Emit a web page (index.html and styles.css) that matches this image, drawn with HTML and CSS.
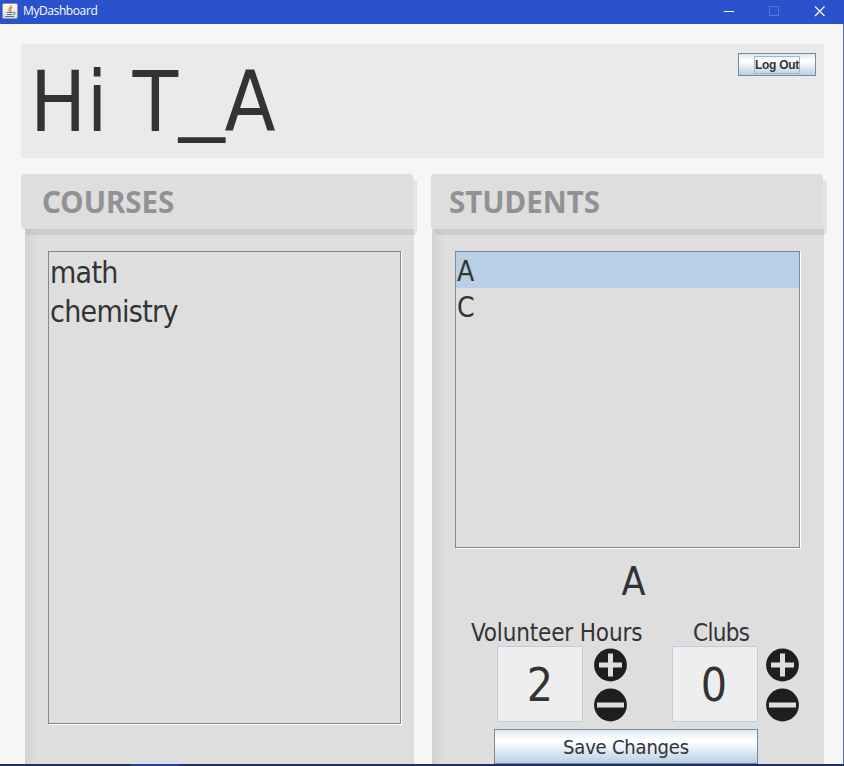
FILE: index.html
```html
<!DOCTYPE html>
<html lang="en">
<head>
<meta charset="utf-8">
<title>MyDashboard</title>
<link rel="stylesheet" href="styles.css">
</head>
<body>
<div class="window">
  <header class="titlebar">
    <svg class="app-icon" width="16" height="16" viewBox="0 0 16 16">
      <defs><linearGradient id="tile" x1="0" y1="0" x2="0" y2="1"><stop offset="0" stop-color="#fff"/><stop offset="1" stop-color="#d3dadd"/></linearGradient></defs>
      <rect x=".5" y=".5" width="15" height="15" rx="1.5" fill="url(#tile)" stroke="#8d969b"/>
      <path d="M9.500 2C10 4 6 5 7 7l1 1.500M10.500 4.500C8 5.500 8 6.500 9 7.500L8.500 9" fill="none" stroke="#e78123" stroke-width="1.200"/>
      <path d="M4.500 9.500h6M5 11.500h5M3 13.500h9M11 9.500c3-1 2.500 2 0 2" fill="none" stroke="#4d789c" stroke-width="1"/>
    </svg>
    <span class="app-name">MyDashboard</span>
    <svg class="controls" width="110" height="22" viewBox="0 0 110 22">
      <path d="M0 11.500h10" stroke="#fff"/>
      <rect x="45.500" y="6.500" width="9" height="9" fill="none" stroke="#5378dc"/>
      <path d="M91 6.500l9.500 9.500M100.500 6.500l-9.500 9.500" stroke="#fff" stroke-width="1.200"/>
    </svg>
  </header>
  <main class="content">
    <section class="greeting">
      <h1>Hi T<span class="underscore">_</span>A</h1>
      <button class="btn logout"><span>Log Out</span></button>
    </section>
    <div class="columns">
      <section class="card courses">
        <h2><span>COURSES</span></h2>
        <div class="body">
          <ul class="list">
            <li>math</li>
            <li>chemistry</li>
          </ul>
        </div>
      </section>
      <section class="card students">
        <h2><span>STUDENTS</span></h2>
        <div class="body">
          <ul class="list">
            <li class="selected">A</li>
            <li>C</li>
          </ul>
          <div class="student-name">A</div>
          <div class="counters">
            <div class="counter volunteer">
              <div class="label">Volunteer Hours</div>
              <div class="control">
                <div class="value">2</div>
                <div class="steps">
                  <svg width="34" height="34" viewBox="0 0 34 34"><circle cx="16.500" cy="17" r="16.400" fill="#1e1e1e"/><path d="M16.500 5.500v23M5 17h23" stroke="#dedede" stroke-width="5"/></svg>
                  <svg width="34" height="34" viewBox="0 0 34 34"><circle cx="16.500" cy="17" r="16.400" fill="#1e1e1e"/><path d="M3 17h27" stroke="#dedede" stroke-width="5"/></svg>
                </div>
              </div>
            </div>
            <div class="counter clubs">
              <div class="label">Clubs</div>
              <div class="control">
                <div class="value">0</div>
                <div class="steps">
                  <svg width="34" height="34" viewBox="0 0 34 34"><circle cx="16.500" cy="17" r="16.400" fill="#1e1e1e"/><path d="M16.500 5.500v23M5 17h23" stroke="#dedede" stroke-width="5"/></svg>
                  <svg width="34" height="34" viewBox="0 0 34 34"><circle cx="16.500" cy="17" r="16.400" fill="#1e1e1e"/><path d="M3 17h27" stroke="#dedede" stroke-width="5"/></svg>
                </div>
              </div>
            </div>
          </div>
          <button class="btn save"><span>Save Changes</span></button>
        </div>
      </section>
    </div>
  </main>
  <div class="taskbar"><i></i></div>
</div>
</body>
</html>
```
FILE: styles.css
```css
* { box-sizing: border-box; }
body { margin: 0; overflow: hidden; font-family: "DejaVu Sans Condensed", "DejaVu Sans", sans-serif; font-stretch: condensed; color: #333; }
h1, h2, ul { margin: 0; padding: 0; font-weight: normal; list-style: none; }
svg { display: block; }
.window { width: 844px; height: 766px; display: flex; flex-direction: column; background: #f6f6f6; }
.titlebar { height: 24px; flex: none; background: #2952cc; color: #fff; display: flex; padding: 0 20px 0 2px; }
.app-icon { margin-top: 3px; }
.app-name { margin-left: 5px; font: 12px/22px "Open Sans", sans-serif; letter-spacing: -.4px; flex: 1; }
.controls { flex: none; margin-right: -10px; }
.content { flex: 1; min-height: 0; border-right: 1px solid #5870b8; padding: 20px 19px 0 21px; overflow: hidden; }
.greeting { height: 114px; background: #eaeaea; display: flex; justify-content: space-between; align-items: flex-start; padding: 9px 8px 0 9px; }
h1 { font-size: 83px; line-height: 97px; letter-spacing: .6px; white-space: nowrap; margin-top: 1px; }
.underscore { display: inline-block; transform: translate(1px, -8px) scaleX(1.23); margin: 0 5px 0 3px; }
.btn { border: 1px solid #7a8a99; border-radius: 0; padding: 0; color: #333; background: linear-gradient(#dde8f3, #fff 30%, #fff 35%, #b8cfe5); font-family: inherit; display: flex; align-items: center; justify-content: center; white-space: nowrap; }
.logout { width: 78px; height: 23px; font: bold 12px/16px "Liberation Sans", sans-serif; letter-spacing: -.3px; }
.logout span { border: 1px solid #a3b8cc; height: 18px; width: 46px; line-height: 17px; }
.columns { display: flex; gap: 18px; margin-top: 16px; }
.card { width: 392px; }
h2 { position: relative; z-index: 1; height: 55px; background: #dedede; border-radius: 3px; box-shadow: 4px 6px 0 rgba(0,0,0,.07); padding: 0 21px; font: bold 29.500px/55px "Noto Sans", sans-serif; color: #919296; }
.body { width: 389px; height: 535px; margin-left: 4px; padding: 22px 13px 0 23px; background: linear-gradient(90deg, #d2d2d2, #dedede 12px); }
.students .body { width: 392px; margin-left: 1px; padding-right: 24px; }
.students h2 { padding-left: 18px; }
.list { border: 1px solid #7a8a99; box-shadow: 1px 1px 0 #fff; height: 473px; font-size: 30px; letter-spacing: -.7px; background: #dedede; }
.list li { height: 39px; line-height: 41px; padding-left: 1px; }
.students .list { height: 297px; font-size: 28px; }
.students .list li { height: 36px; line-height: 40px; }
.selected { background: #b8cfe5; }
.student-name { font-size: 39px; height: 70px; line-height: 68px; text-align: center; padding-left: 12px; }
.counters { display: flex; }
.counter { padding-left: 42px; width: 175px; }
.label { height: 28px; line-height: 30px; font-size: 24px; letter-spacing: -.15px; white-space: nowrap; }
.volunteer .label { margin-left: -26px; }
.clubs .label { margin-left: 21px; letter-spacing: -.7px; }
.control { display: flex; gap: 11px; }
.clubs .control { gap: 8px; }
.value { width: 86px; height: 76px; flex: none; border: 1px solid #b8cfe5; background: #eee; text-align: center; font-size: 46px; line-height: 77px; padding-right: 2px; }
.volunteer .value { padding-right: 0; }
.steps { display: grid; gap: 6px; padding-top: 2px; align-content: start; }
.save { width: 264px; height: 35px; margin: 7px 0 0 39px; font-size: 20px; letter-spacing: -.2px; }
.taskbar { height: 2px; flex: none; background: #22305f; padding-left: 131px; }
.taskbar i { display: block; width: 48px; height: 2px; background: #293f9e; }
```
